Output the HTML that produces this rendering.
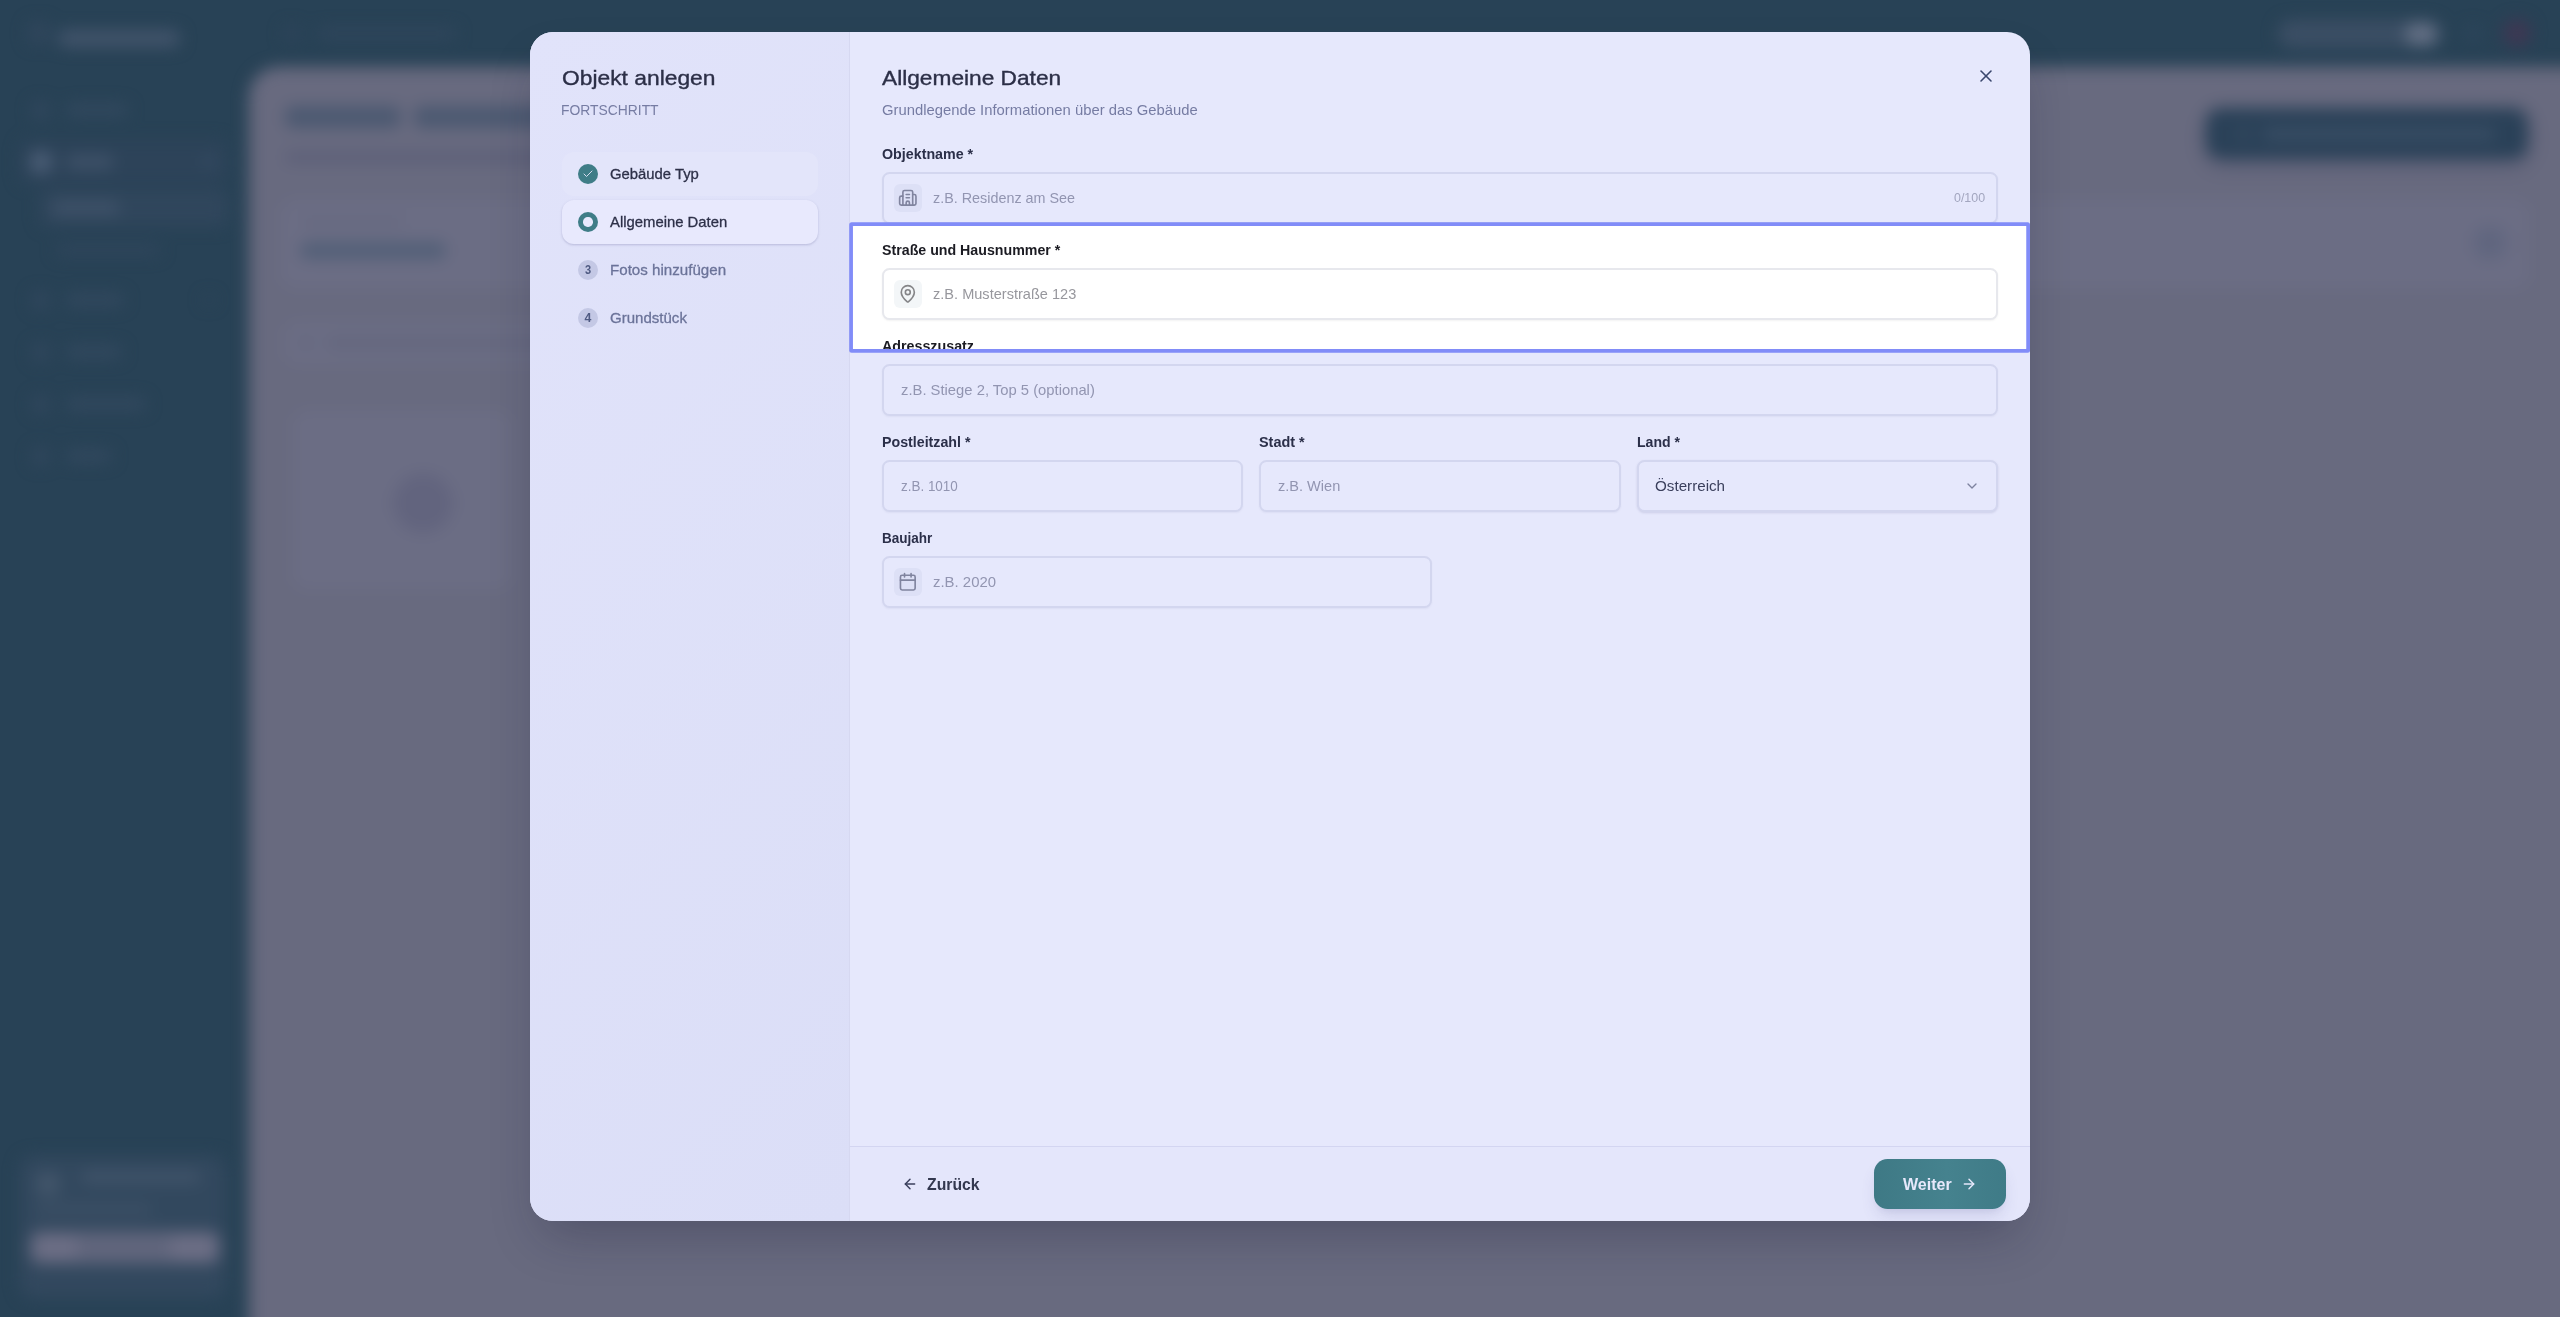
<!DOCTYPE html>
<html lang="de">
<head>
<meta charset="utf-8">
<title>Objekt anlegen</title>
<style>
*{box-sizing:border-box;margin:0;padding:0}
html,body{width:2560px;height:1317px;overflow:hidden}
body{font-family:"Liberation Sans",sans-serif;background:#284256;position:relative;color:#2e3350}
.abs{position:absolute}
.t{position:absolute;white-space:nowrap;line-height:1;transform-origin:0 0}

/* ---------- blurred app background ---------- */
#bg{position:absolute;left:0;top:0;width:2560px;height:1317px;overflow:hidden;background:#284256}
#bgblur{position:absolute;left:-40px;top:-40px;width:2640px;height:1397px;filter:blur(8px);font-family:"Liberation Sans",sans-serif}
#bgblur > div{position:absolute}

/* ---------- modal ---------- */
#modal{position:absolute;left:530px;top:32px;width:1500px;height:1189px;border-radius:23px;background:#e6e8fc;
  box-shadow:0 25px 50px -12px rgba(20,22,50,.28);overflow:hidden}
#left{position:absolute;left:0;top:0;width:320px;height:1189px;background:linear-gradient(135deg,#e1e3fa 0%,#dbdef7 100%);border-right:1px solid #d6d8f1}
.step{position:absolute;left:32px;width:256px;height:44px;border-radius:12px}
.dot{position:absolute;left:16px;top:12px;width:20px;height:20px;border-radius:50%}
.lbl{font-weight:700;color:#2b2f49}
.inp{position:absolute;height:52px;border:2px solid #d3d6ef;border-radius:7.5px;background:#e6e8fc;box-shadow:0 1px 2px rgba(60,60,120,.06)}
.ib{position:absolute;left:10px;top:10px;width:28px;height:28px;border-radius:6px;background:#dde0f6}
.ph{color:#9b9eb8}
#layer{position:absolute;left:0;top:0;width:2560px;height:1317px;overflow:hidden;will-change:transform}
</style>
</head>
<body>
<div id="bg"><div id="bgblur">
<div style="left:289px;top:107px;width:2400px;height:1400px;background:#686a7f;border-radius:0px;border-top-left-radius:30px"></div>
<div style="left:68px;top:62px;width:22px;height:22px;background:#30465c;border-radius:7px;"></div>
<div style="left:98px;top:70px;width:122px;height:17px;background:#42546b;border-radius:8px;"></div>
<div style="left:72px;top:142px;width:17px;height:17px;background:#31475d;border-radius:6px;"></div>
<div style="left:106px;top:144px;width:62px;height:12px;background:#33495f;border-radius:6px;"></div>
<div style="left:60px;top:180px;width:208px;height:44px;background:#2d4359;border-radius:10px;"></div>
<div style="left:70px;top:191px;width:22px;height:22px;background:#4a5d75;border-radius:8px;"></div>
<div style="left:106px;top:195px;width:48px;height:14px;background:#3f5269;border-radius:7px;"></div>
<div style="left:243px;top:197px;width:12px;height:9px;background:#374e66;border-radius:4px;"></div>
<div style="left:80px;top:230px;width:188px;height:36px;background:#30465c;border-radius:8px;"></div>
<div style="left:92px;top:241px;width:68px;height:14px;background:#3f5269;border-radius:7px;"></div>
<div style="left:96px;top:285px;width:104px;height:10px;background:#30465c;border-radius:5px;"></div>
<div style="left:72px;top:332px;width:17px;height:17px;background:#31475d;border-radius:6px;"></div>
<div style="left:106px;top:334px;width:58px;height:12px;background:#33495f;border-radius:6px;"></div>
<div style="left:244px;top:336px;width:10px;height:8px;background:#2f455b;border-radius:4px;"></div>
<div style="left:72px;top:384px;width:17px;height:17px;background:#31475d;border-radius:6px;"></div>
<div style="left:106px;top:386px;width:56px;height:12px;background:#33495f;border-radius:6px;"></div>
<div style="left:72px;top:436px;width:17px;height:17px;background:#31475d;border-radius:6px;"></div>
<div style="left:106px;top:438px;width:80px;height:12px;background:#33495f;border-radius:6px;"></div>
<div style="left:72px;top:488px;width:17px;height:17px;background:#31475d;border-radius:6px;"></div>
<div style="left:106px;top:490px;width:46px;height:12px;background:#33495f;border-radius:6px;"></div>
<div style="left:60px;top:1196px;width:206px;height:142px;background:#32485e;border-radius:14px;"></div>
<div style="left:75px;top:1211px;width:26px;height:26px;background:#42556a;border-radius:13px;"></div>
<div style="left:121px;top:1211px;width:120px;height:12px;background:#41546a;border-radius:6px;"></div>
<div style="left:76px;top:1244px;width:116px;height:10px;background:#3d5066;border-radius:5px;"></div>
<div style="left:70px;top:1271px;width:190px;height:33px;background:#60657c;border-radius:9px;"></div>
<div style="left:74px;top:1276px;width:44px;height:23px;background:#6c6e85;border-radius:8px;"></div>
<div style="left:210px;top:1276px;width:46px;height:23px;background:#6c6e85;border-radius:8px;"></div>
<div style="left:324px;top:66px;width:15px;height:15px;background:#2e445a;border-radius:5px;"></div>
<div style="left:358px;top:68px;width:138px;height:11px;background:#30465c;border-radius:5px;"></div>
<div style="left:2318px;top:60px;width:163px;height:28px;background:#3b4e64;border-radius:13px;"></div>
<div style="left:2445px;top:63px;width:32px;height:22px;background:#636f84;border-radius:10px;"></div>
<div style="left:2506px;top:66px;width:14px;height:14px;background:#2f475d;border-radius:6px;"></div>
<div style="left:2543px;top:59px;width:28px;height:28px;background:#3e3853;border-radius:14px;"></div>
<div style="left:325px;top:146px;width:116px;height:22px;background:#4c5971;border-radius:8px;"></div>
<div style="left:454px;top:146px;width:140px;height:22px;background:#4c5971;border-radius:8px;"></div>
<div style="left:325px;top:192px;width:260px;height:11px;background:#5c5f78;border-radius:5px;"></div>
<div style="left:2246px;top:148px;width:322px;height:51px;background:#2a4158;border-radius:15px;box-shadow:0 6px 16px rgba(40,50,80,.28)"></div>
<div style="left:2276px;top:167px;width:14px;height:14px;background:#34495f;border-radius:6px;"></div>
<div style="left:2302px;top:167px;width:234px;height:14px;background:#384d64;border-radius:7px;"></div>
<div style="left:320px;top:239px;width:2250px;height:90px;background:#6b6d84;border-radius:14px;box-shadow:0 0 0 1px #65677e"></div>
<div style="left:342px;top:258px;width:100px;height:9px;background:#65687f;border-radius:4px;"></div>
<div style="left:340px;top:282px;width:146px;height:17px;background:#525f77;border-radius:7px;"></div>
<div style="left:2514px;top:267px;width:32px;height:32px;background:#60667f;border-radius:11px;"></div>
<div style="left:324px;top:362px;width:300px;height:42px;background:#6b6d84;border-radius:10px;box-shadow:0 0 0 1px #66687f"></div>
<div style="left:340px;top:377px;width:12px;height:12px;background:#62657c;border-radius:5px;"></div>
<div style="left:365px;top:378px;width:230px;height:10px;background:#62657c;border-radius:5px;"></div>
<div style="left:332px;top:450px;width:220px;height:180px;background:#6b6d84;border-radius:14px;box-shadow:0 0 0 1px #65677e"></div>
<div style="left:433px;top:513px;width:60px;height:60px;background:#62647e;border-radius:30px;"></div>
</div></div>
<div id="modal"><div id="left"></div></div>
<div id="layer">
<span class="t" style="left:562.10px;top:67.90px;font-size:20.2px;font-weight:400;color:#2c2f47;transform:scale(1.1302,1.000);transform-origin:0 17.10px;-webkit-text-stroke:0.35px #2c2f47">Objekt anlegen</span>
<span class="t" style="left:561.08px;top:102.00px;font-size:15px;font-weight:400;color:#767ca3;transform:scale(0.9244,1.000);transform-origin:0 13.00px;">FORTSCHRITT</span>
<div class="step" style="left:562px;top:152px;background:#e3e5fa"></div>
<div class="step" style="left:562px;top:200px;background:#e8e9fd;box-shadow:0 1px 3px rgba(60,60,120,.14),0 1px 2px rgba(60,60,120,.10)"></div>
<div class="dot" style="left:578px;top:164px;background:#3f7d87"><svg class="abs" style="left:4px;top:4px" width="12" height="12" viewBox="0 0 24 24" fill="none" stroke="#dfe3f6" stroke-width="1.9" stroke-linecap="round" stroke-linejoin="round"><path d="M20 6 9 17l-5-5"/></svg></div>
<div class="dot" style="left:578px;top:212px;background:#3f7d87"><div class="abs" style="left:5.3px;top:5.3px;width:9.4px;height:9.4px;border-radius:50%;background:#e8e9fd"></div></div>
<div class="dot" style="left:578px;top:260px;background:#c4c8e5"></div>
<div class="dot" style="left:578px;top:308px;background:#c4c8e5"></div>
<span class="t" style="left:584.90px;top:263.85px;font-size:12.3px;font-weight:700;color:#4f5a82;transform:scale(0.9000,1.000);transform-origin:0 10.15px;">3</span>
<span class="t" style="left:584.60px;top:311.85px;font-size:12.3px;font-weight:700;color:#4f5a82;transform:scale(1.0000,1.000);transform-origin:0 10.15px;">4</span>
<span class="t" style="left:610.10px;top:166.00px;font-size:15px;font-weight:400;color:#2d3048;transform:scale(0.9897,1.000);transform-origin:0 13.00px;-webkit-text-stroke:0.3px #2d3048">Gebäude Typ</span>
<span class="t" style="left:610.30px;top:214.00px;font-size:15px;font-weight:400;color:#2d3048;transform:scale(0.9902,1.000);transform-origin:0 13.00px;-webkit-text-stroke:0.3px #2d3048">Allgemeine Daten</span>
<span class="t" style="left:609.89px;top:262.00px;font-size:15px;font-weight:400;color:#6b7399;transform:scale(1.0085,1.000);transform-origin:0 13.00px;-webkit-text-stroke:0.3px #6b7399">Fotos hinzufügen</span>
<span class="t" style="left:610.00px;top:310.00px;font-size:15px;font-weight:400;color:#6b7399;transform:scale(1.0026,1.000);transform-origin:0 13.00px;-webkit-text-stroke:0.3px #6b7399">Grundstück</span>
<span class="t" style="left:882.40px;top:67.90px;font-size:20.2px;font-weight:400;color:#2c2f47;transform:scale(1.1244,1.000);transform-origin:0 17.10px;-webkit-text-stroke:0.35px #2c2f47">Allgemeine Daten</span>
<span class="t" style="left:881.80px;top:102.00px;font-size:15px;font-weight:400;color:#767ca3;transform:scale(0.9886,1.000);transform-origin:0 13.00px;">Grundlegende Informationen über das Gebäude</span>
<svg class="abs" style="left:1976px;top:66px" width="20" height="20" viewBox="0 0 24 24" fill="none" stroke="#39466c" stroke-width="1.9" stroke-linecap="round" stroke-linejoin="round"><path d="M18 6 6 18"/><path d="m6 6 12 12"/></svg>
<span class="t" style="left:882.10px;top:146.75px;font-size:14.5px;font-weight:700;color:#2b2f49;transform:scale(0.9836,1.000);transform-origin:0 12.25px;">Objektname *</span>
<span class="t" style="left:882.10px;top:434.75px;font-size:14.5px;font-weight:700;color:#2b2f49;transform:scale(0.9801,1.000);transform-origin:0 12.25px;">Postleitzahl *</span>
<span class="t" style="left:1259.30px;top:434.75px;font-size:14.5px;font-weight:700;color:#2b2f49;transform:scale(0.9940,1.000);transform-origin:0 12.25px;">Stadt *</span>
<span class="t" style="left:1636.70px;top:434.75px;font-size:14.5px;font-weight:700;color:#2b2f49;transform:scale(0.9717,1.000);transform-origin:0 12.25px;">Land *</span>
<span class="t" style="left:882.10px;top:530.75px;font-size:14.5px;font-weight:700;color:#2b2f49;transform:scale(0.9330,1.000);transform-origin:0 12.25px;">Baujahr</span>
<div class="inp " style="left:882px;top:172px;width:1116px;"><div class="ib" style=""><svg class="abs" style="left:4.2px;top:4.3px" width="19.6" height="19.6" viewBox="0 0 24 24" fill="none" stroke="#80849f" stroke-width="2" stroke-linecap="round" stroke-linejoin="round"><path d="M10 12h4"/><path d="M10 8h4"/><path d="M14 21v-3a2 2 0 0 0-4 0v3"/><path d="M6 10H4a2 2 0 0 0-2 2v7a2 2 0 0 0 2 2h16a2 2 0 0 0 2-2v-9a2 2 0 0 0-2-2h-2"/><path d="M6 21V5a2 2 0 0 1 2-2h8a2 2 0 0 1 2 2v16"/></svg></div></div>
<div class="inp " style="left:882px;top:364px;width:1116px;"></div>
<div class="inp " style="left:882px;top:460px;width:361.3px;"></div>
<div class="inp " style="left:1259.3px;top:460px;width:361.4px;"></div>
<div class="inp " style="left:1636.7px;top:460px;width:361.3px;box-shadow:0 1px 3px rgba(60,60,120,.09),0 1px 2px rgba(60,60,120,.06)"></div>
<div class="inp " style="left:882px;top:556px;width:550px;"><div class="ib" style=""><svg class="abs" style="left:4.2px;top:4.3px" width="19.6" height="19.6" viewBox="0 0 24 24" fill="none" stroke="#80849f" stroke-width="2" stroke-linecap="round" stroke-linejoin="round"><path d="M8 2v4"/><path d="M16 2v4"/><rect width="18" height="18" x="3" y="4" rx="2"/><path d="M3 10h18"/></svg></div></div>
<span class="t" style="left:932.70px;top:190.00px;font-size:15px;font-weight:400;color:#9295b1;transform:scale(0.9570,1.000);transform-origin:0 13.00px;">z.B. Residenz am See</span>
<span class="t" style="left:1954.40px;top:191.75px;font-size:12.5px;font-weight:400;color:#a3a6bf;transform:scale(0.9927,1.000);transform-origin:0 10.25px;">0/100</span>
<span class="t" style="left:900.80px;top:382.00px;font-size:15px;font-weight:400;color:#9295b1;transform:scale(0.9864,1.000);transform-origin:0 13.00px;">z.B. Stiege 2, Top 5 (optional)</span>
<span class="t" style="left:900.80px;top:478.00px;font-size:15px;font-weight:400;color:#9295b1;transform:scale(0.8963,1.000);transform-origin:0 13.00px;">z.B. 1010</span>
<span class="t" style="left:1277.60px;top:478.00px;font-size:15px;font-weight:400;color:#9295b1;transform:scale(0.9696,1.000);transform-origin:0 13.00px;">z.B. Wien</span>
<span class="t" style="left:1654.70px;top:478.00px;font-size:15px;font-weight:400;color:#3a3f5c;transform:scale(1.0125,1.000);transform-origin:0 13.00px;">Österreich</span>
<span class="t" style="left:932.70px;top:574.00px;font-size:15px;font-weight:400;color:#9295b1;transform:scale(0.9947,1.000);transform-origin:0 13.00px;">z.B. 2020</span>
<svg class="abs" style="left:1964px;top:478px" width="16" height="16" viewBox="0 0 24 24" fill="none" stroke="#7d829f" stroke-width="2" stroke-linecap="round" stroke-linejoin="round"><path d="m6 9 6 6 6-6"/></svg>
<svg class="abs" style="left:840px;top:214px" width="1200" height="148" viewBox="840 214 1200 148"><rect x="849.2" y="222.2" width="1180.8" height="130.6" rx="2.5" fill="#818cf8"/><rect x="852.95" y="225.95" width="1173.3" height="123.1" rx="0.5" fill="#ffffff"/></svg>
<div class="abs" style="left:853px;top:226px;width:1173px;height:123px;overflow:hidden"><div class="abs" style="left:-853px;top:-226px;width:2560px;height:1317px">
<span class="t" style="left:881.90px;top:242.75px;font-size:14.5px;font-weight:700;color:#1b1b22;transform:scale(0.9794,1.000);transform-origin:0 12.25px;">Straße und Hausnummer *</span>
<div class="inp " style="left:882px;top:268px;width:1116px;background:#fff;border-color:#e7e8ed;box-shadow:0 1px 2px rgba(0,0,0,.05)"><div class="ib" style="background:#f3f6f8"><svg class="abs" style="left:4.2px;top:4.3px" width="19.6" height="19.6" viewBox="0 0 24 24" fill="none" stroke="#858588" stroke-width="2" stroke-linecap="round" stroke-linejoin="round"><path d="M20 10c0 4.993-5.539 10.193-7.399 11.799a1 1 0 0 1-1.202 0C9.539 20.193 4 14.993 4 10a8 8 0 0 1 16 0"/><circle cx="12" cy="10" r="3"/></svg></div></div>
<span class="t" style="left:932.70px;top:286.00px;font-size:15px;font-weight:400;color:#97979d;transform:scale(0.9707,1.000);transform-origin:0 13.00px;">z.B. Musterstraße 123</span>
<span class="t" style="left:881.90px;top:338.75px;font-size:14.5px;font-weight:700;color:#1b1b22;transform:scale(0.9836,1.000);transform-origin:0 12.25px;">Adresszusatz</span>
</div></div>
<div class="abs" style="left:850px;top:1146px;width:1180px;height:75px;background:#e4e6fb;border-top:1px solid #d3d5f1;border-bottom-right-radius:23px"></div>
<svg class="abs" style="left:902px;top:1176px" width="16" height="16" viewBox="0 0 24 24" fill="none" stroke="#3a3f5c" stroke-width="2.2" stroke-linecap="round" stroke-linejoin="round"><path d="m12 19-7-7 7-7"/><path d="M19 12H5"/></svg>
<span class="t" style="left:926.80px;top:1177.10px;font-size:16.8px;font-weight:700;color:#33384f;transform:scale(0.9397,1.000);transform-origin:0 13.90px;">Zurück</span>
<div class="abs" style="left:1874px;top:1159px;width:132px;height:50px;border-radius:13.5px;background:linear-gradient(90deg,#3e7985 0%,#45828e 55%,#3f7b87 100%);box-shadow:0 10px 16px -3px rgba(80,80,140,.16),0 4px 7px -4px rgba(80,80,140,.12)"></div>
<span class="t" style="left:1903.30px;top:1177.10px;font-size:16.8px;font-weight:700;color:#e6e8fb;transform:scale(0.9562,1.000);transform-origin:0 13.90px;">Weiter</span>
<svg class="abs" style="left:1961px;top:1176px" width="16" height="16" viewBox="0 0 24 24" fill="none" stroke="#e6e8fb" stroke-width="2.2" stroke-linecap="round" stroke-linejoin="round"><path d="M5 12h14"/><path d="m12 5 7 7-7 7"/></svg>
</div>
</body>
</html>
